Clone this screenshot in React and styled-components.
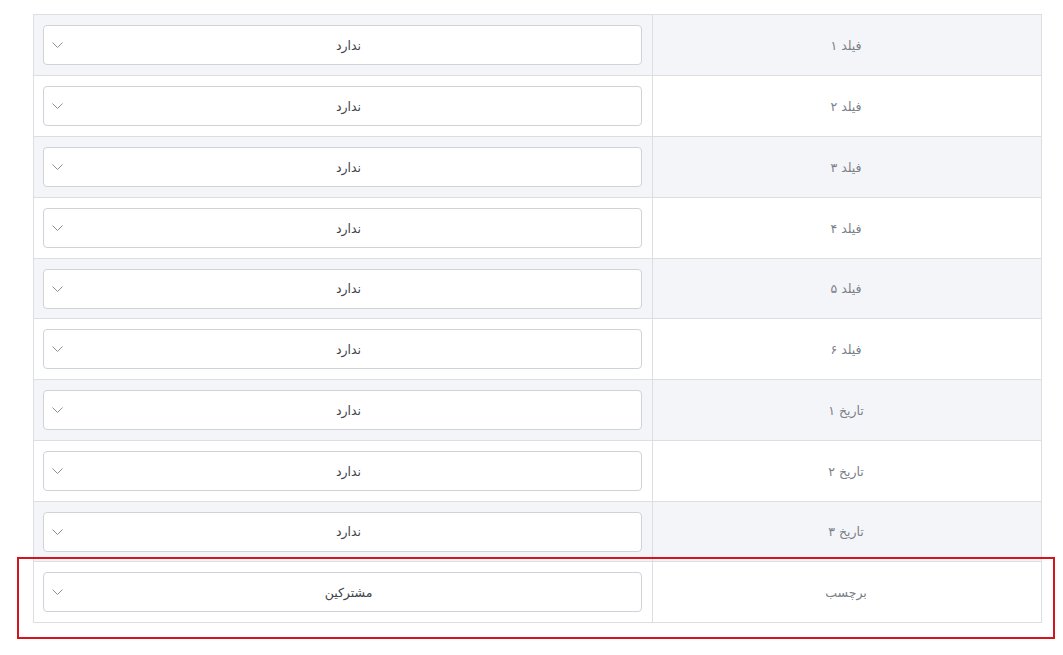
import React from 'react';
import styled, { createGlobalStyle } from 'styled-components';

const Global = createGlobalStyle`
  html, body {
    margin: 0;
    padding: 0;
    background: #fff;
    font-family: "DejaVu Sans", "Noto Sans", sans-serif;
  }
`;

const Page = styled.div`
  position: relative;
  width: 1063px;
  height: 655px;
  padding: 14px 21px 0 33px;
  box-sizing: border-box;
`;

const Table = styled.div`
  direction: rtl;
  border: 1px solid #dcdee2;
  border-bottom: none;
  width: 1009px;
  box-sizing: border-box;
`;

const Row = styled.div`
  display: grid;
  grid-template-columns: 389px 1fr;
  height: ${p => p.$h}px;
  background: ${p => (p.$alt ? '#f4f5f8' : '#fff')};
  border-bottom: 1px solid #dcdee2;
`;

const Label = styled.div`
  display: flex;
  align-items: center;
  justify-content: center;
  border-left: 1px solid #dcdee2;
  color: #7b8089;
  font-size: 12.5px;
  padding-right: 2px;
`;

const Cell = styled.div`
  display: flex;
  align-items: center;
  padding: 0 10px 0 9px;
`;

const Select = styled.div`
  position: relative;
  flex: 1;
  height: 40px;
  box-sizing: border-box;
  border: 1px solid #cfd2d7;
  border-radius: 4px;
  background: #fff;
  display: flex;
  align-items: center;
  justify-content: center;
  padding-left: 12px;
  color: #40444b;
  font-size: 12.5px;
`;

const Chevron = styled.svg`
  position: absolute;
  left: 8px;
  top: 50%;
  margin-top: -3px;
`;

const Highlight = styled.div`
  position: absolute;
  left: 17px;
  top: 557px;
  width: 1038px;
  height: 82px;
  box-sizing: border-box;
  border: 2px solid #d4161c;
  pointer-events: none;
`;

const rows = [
  ['فیلد ۱', 'ندارد'],
  ['فیلد ۲', 'ندارد'],
  ['فیلد ۳', 'ندارد'],
  ['فیلد ۴', 'ندارد'],
  ['فیلد ۵', 'ندارد'],
  ['فیلد ۶', 'ندارد'],
  ['تاریخ ۱', 'ندارد'],
  ['تاریخ ۲', 'ندارد'],
  ['تاریخ ۳', 'ندارد'],
  ['برچسب', 'مشترکین'],
];

const heights = [60, 60, 60, 60, 59, 60, 60, 60, 59, 60];

export default function App() {
  return (
    <Page>
      <Global />
      <Table>
        {rows.map(([label, value], i) => (
          <Row key={label} $alt={i % 2 === 0 && i < 9} $h={heights[i]}>
            <Label>{label}</Label>
            <Cell>
              <Select>
                {value}
                <Chevron width="11" height="6" viewBox="0 0 11 6" fill="none">
                  <path d="M0.5 0.5 L5.5 5.5 L10.5 0.5" stroke="#8a8f96" strokeWidth="1" />
                </Chevron>
              </Select>
            </Cell>
          </Row>
        ))}
      </Table>
      <Highlight />
    </Page>
  );
}
